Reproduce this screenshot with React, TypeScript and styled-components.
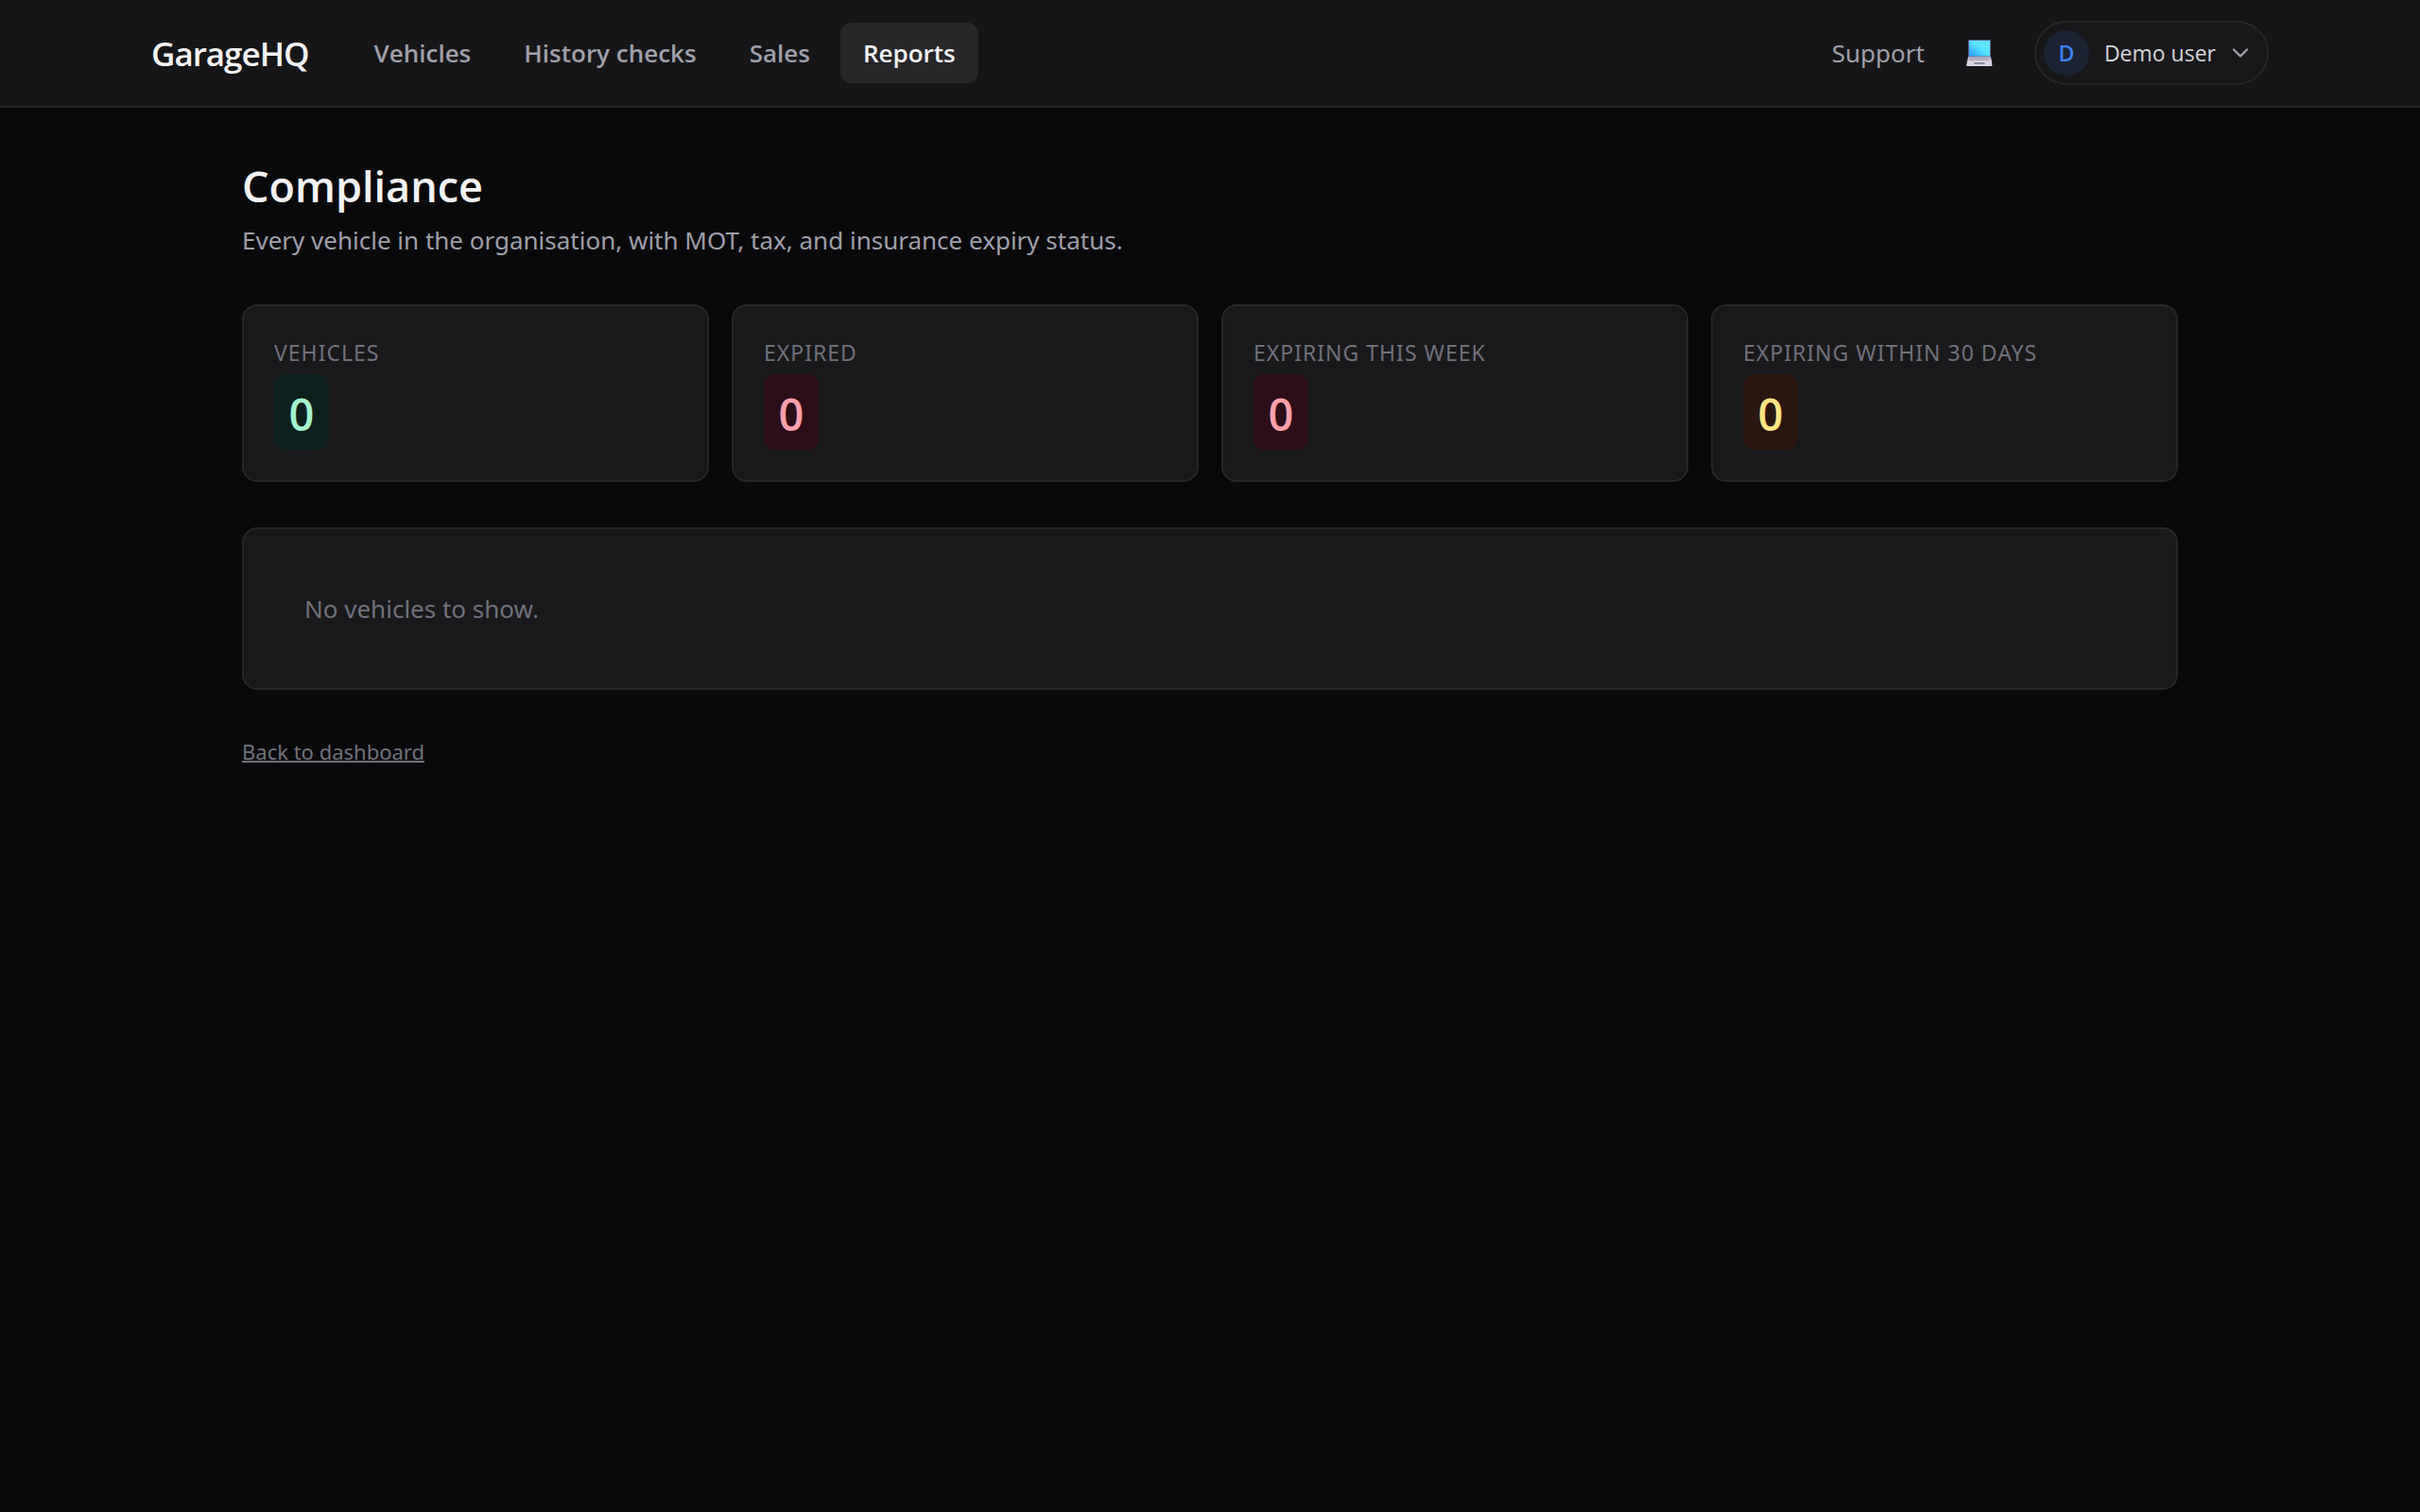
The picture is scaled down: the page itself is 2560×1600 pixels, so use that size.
import React from "react";
import styled, { createGlobalStyle } from "styled-components";
import { ChevronDown } from "lucide-react";

const display = `"Open Sans", "Noto Sans", sans-serif`;

const GlobalStyle = createGlobalStyle`
  *, *::before, *::after { box-sizing: border-box; }
  body {
    margin: 0;
    min-height: 100vh;
    background: #09090b;
    color: #f4f4f5;
    font-family: "Noto Sans", "Open Sans", sans-serif;
    font-size: 26px;
    line-height: 40px;
  }
  h1, p, dl, dd, dt { margin: 0; }
  a { color: inherit; text-decoration: none; }
  button { font: inherit; color: inherit; cursor: pointer; }
`;

const Header = styled.header`
  background: #161618;
  border-bottom: 2px solid #27272a;
`;

const HeaderInner = styled.div`
  display: flex;
  align-items: center;
  justify-content: space-between;
  max-width: 2240px;
  min-height: 112px;
  margin: 0 auto;
`;

const Group = styled.div<{ $gap: number }>`
  display: flex;
  align-items: center;
  gap: ${(p) => p.$gap}px;
`;

const Brand = styled.a`
  padding-top: 2px;
  font-family: ${display};
  font-size: 35px;
  font-weight: 600;
  line-height: 56px;
  letter-spacing: -1px;
`;

const Nav = styled.nav`
  display: flex;
  gap: 8px;
`;

const NavLink = styled.a<{ $active?: boolean }>`
  padding: 12px 24px;
  border-radius: 12px;
  font-family: ${display};
  font-weight: 600;
  color: ${(p) => (p.$active ? "#f4f4f5" : "#9f9fa9")};
  background: ${(p) => (p.$active ? "#27272a" : "transparent")};
`;

const SupportLink = styled.a`
  color: #9f9fa9;
`;

const ThemeButton = styled.button`
  display: flex;
  padding: 12px 20px;
  border: 0;
  border-radius: 12px;
  background: transparent;
`;

const UserButton = styled.button`
  display: flex;
  align-items: center;
  gap: 16px;
  padding: 8px 14px 8px 8px;
  border: 2px solid #27272a;
  border-radius: 34px;
  background: #18181b;
  color: #d4d4d8;
  font-family: ${display};
  font-size: 23px;
  line-height: 34px;

  svg { color: #9f9fa9; margin-left: -4px; }
`;

const Avatar = styled.span`
  display: grid;
  place-items: center;
  width: 48px;
  height: 48px;
  border-radius: 50%;
  background: #1b2333;
  color: #3b82f6;
  font-weight: 600;
`;

const Main = styled.main`
  max-width: 2048px;
  margin: 0 auto;
  padding: 48px 0;
`;

const Title = styled.h1`
  font-family: ${display};
  font-size: 45px;
  font-weight: 600;
  line-height: 70px;
`;

const Subtitle = styled.p`
  margin-top: 2px;
  color: #9f9fa9;
`;

const Stats = styled.dl`
  display: grid;
  grid-template-columns: repeat(4, 1fr);
  gap: 24px;
  margin: 48px 0;
`;

const Card = styled.div`
  padding: 32px;
  border: 2px solid #27272a;
  border-radius: 16px;
  background: #19191b;
`;

const StatLabel = styled.dt`
  color: #71717b;
  font-size: 23px;
  line-height: 34px;
  letter-spacing: 1px;
  text-transform: uppercase;
`;

const tones = {
  green: { bg: "#0d1f1c", fg: "#a4f4cf" },
  red: { bg: "#2d0d18", fg: "#ffa1ad" },
  amber: { bg: "#2b160f", fg: "#fee685" },
};

type Tone = keyof typeof tones;

const StatValue = styled.dd<{ $tone: Tone }>`
  width: fit-content;
  min-width: 58px;
  margin-top: 6px;
  padding: 8px 14px 4px;
  border-radius: 12px;
  background: ${(p) => tones[p.$tone].bg};
  color: ${(p) => tones[p.$tone].fg};
  font-family: ${display};
  font-size: 47px;
  font-weight: 600;
  line-height: 68px;
  text-align: center;
`;

const Empty = styled(Card)`
  padding: 64px;
  color: #71717b;
`;

const BackLink = styled.a`
  display: inline-block;
  margin-top: 48px;
  color: #71717b;
  font-size: 22px;
  line-height: 34px;
  && {
    text-decoration: underline;
    text-decoration-thickness: 2px;
  }
`;

const navItems = ["Vehicles", "History checks", "Sales", "Reports"];

const stats: { label: string; value: number; tone: Tone }[] = [
  { label: "Vehicles", value: 0, tone: "green" },
  { label: "Expired", value: 0, tone: "red" },
  { label: "Expiring this week", value: 0, tone: "red" },
  { label: "Expiring within 30 days", value: 0, tone: "amber" },
];

function LaptopIcon() {
  return (
    <svg width="28" height="28" viewBox="0 0 28 28" aria-hidden="true">
      <defs>
        <linearGradient id="screen" x1="0" y1="1" x2="1" y2="0">
          <stop offset="0.1" stopColor="#2fa8f8" />
          <stop offset="0.55" stopColor="#5be5ff" />
        </linearGradient>
        <linearGradient id="base" x1="0" y1="0" x2="0" y2="1">
          <stop offset="0" stopColor="#b3adc2" />
          <stop offset="1" stopColor="#dcd6e8" />
        </linearGradient>
      </defs>
      <rect x="2" y="0" width="24" height="19" rx="1" fill="#635994" />
      <rect x="3" y="1" width="22" height="16.5" fill="url(#screen)" />
      <path d="M2 18h24l1 5H1z" fill="url(#base)" />
      <path d="M4 19.5h20M3.5 21.5h21" stroke="#918b9f" strokeWidth="1" strokeDasharray="1.4 0.7" />
      <path d="M1 23h26l.4 4.2a.8.8 0 0 1-.8.8H.9a.8.8 0 0 1-.8-.8z" fill="#d9d3e4" />
      <rect x="8.5" y="24" width="11" height="2" rx="0.6" fill="#8d879b" />
    </svg>
  );
}

export default function App() {
  return (
    <>
      <GlobalStyle />
      <Header>
        <HeaderInner>
          <Group $gap={45}>
            <Brand href="#">GarageHQ</Brand>
            <Nav aria-label="Main">
              {navItems.map((item) => (
                <NavLink key={item} href="#" $active={item === "Reports"}>
                  {item}
                </NavLink>
              ))}
            </Nav>
          </Group>
          <Group $gap={24}>
            <SupportLink href="#">Support</SupportLink>
            <ThemeButton type="button" aria-label="Theme">
              <LaptopIcon />
            </ThemeButton>
            <UserButton type="button" aria-haspopup="menu">
              <Avatar>D</Avatar>
              Demo user
              <ChevronDown size={28} strokeWidth={2} aria-hidden="true" />
            </UserButton>
          </Group>
        </HeaderInner>
      </Header>
      <Main>
        <Title>Compliance</Title>
        <Subtitle>Every vehicle in the organisation, with MOT, tax, and insurance expiry status.</Subtitle>
        <Stats>
          {stats.map((s) => (
            <Card key={s.label}>
              <StatLabel>{s.label}</StatLabel>
              <StatValue $tone={s.tone}>{s.value}</StatValue>
            </Card>
          ))}
        </Stats>
        <Empty>No vehicles to show.</Empty>
        <BackLink href="#">Back to dashboard</BackLink>
      </Main>
    </>
  );
}
